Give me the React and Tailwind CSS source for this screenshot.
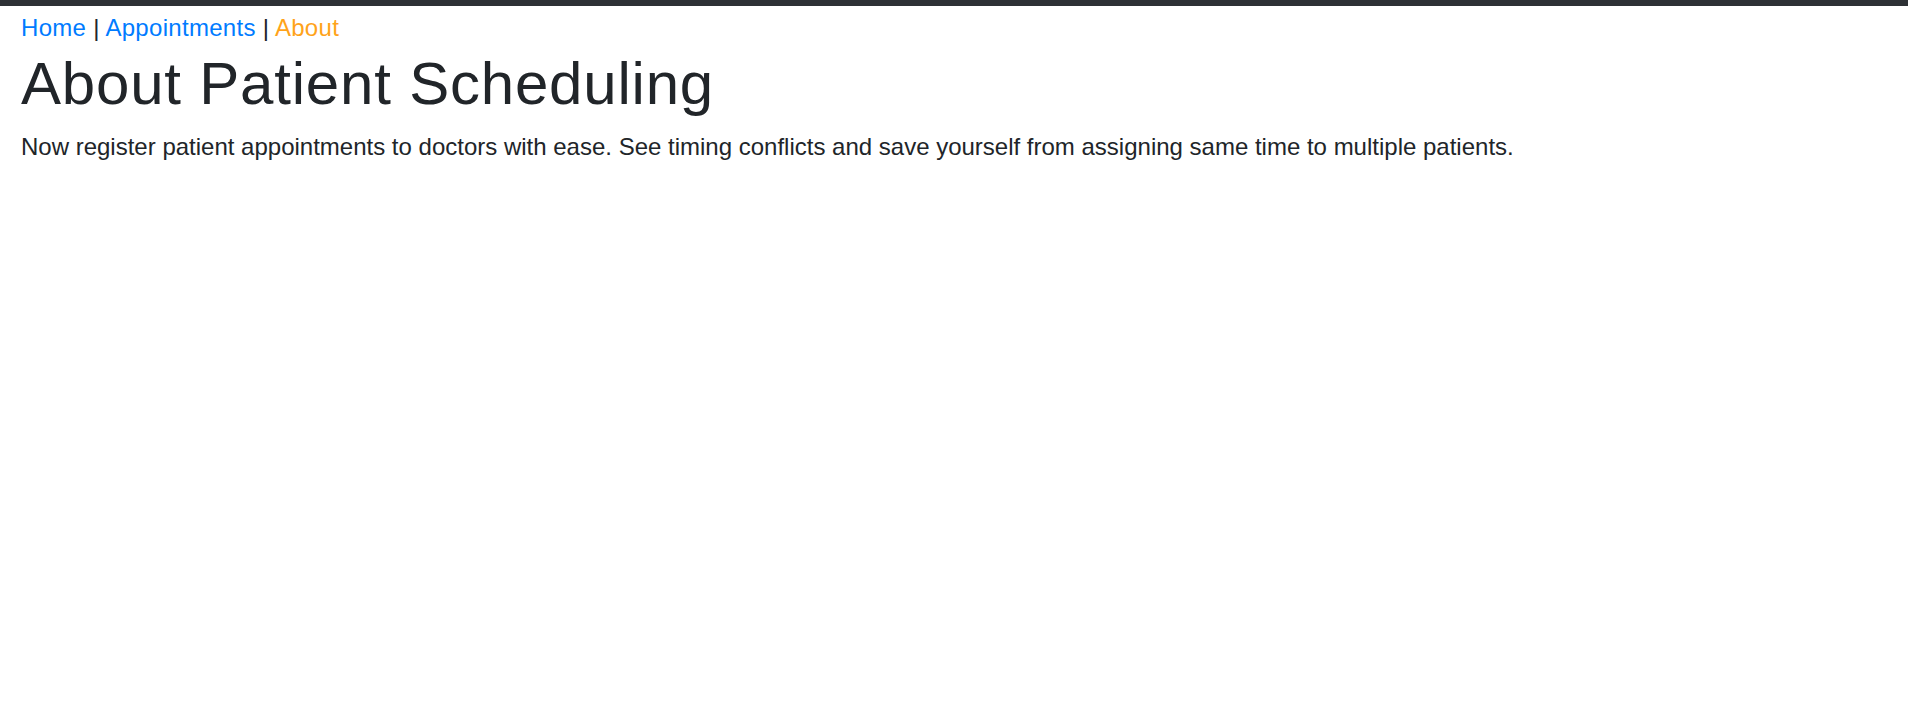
export default function App() {
  return (
    <div className="min-h-screen bg-white text-[#212529]" style={{ fontFamily: '"Liberation Sans", Arial, sans-serif' }}>
      <div className="h-[6px] bg-[#2d3135]" />
      <div className="px-[21px]">
        <nav className="text-[24px] leading-[37px] mt-[3px] tracking-[0.3px]">
          <a href="#" className="text-[#007bff]">Home</a>
          <span> | </span>
          <a href="#" className="text-[#007bff]">Appointments</a>
          <span> | </span>
          <a href="#" className="text-[#ffa31a]">About</a>
        </nav>
        <h1 className="text-[60px] leading-[72px] font-normal mt-[2px] mb-[9px] tracking-[0.8px]">About Patient Scheduling</h1>
        <p className="text-[24px] leading-[36px]">
          Now register patient appointments to doctors with ease. See timing conflicts and save yourself from assigning same time to multiple patients.
        </p>
      </div>
    </div>
  );
}
